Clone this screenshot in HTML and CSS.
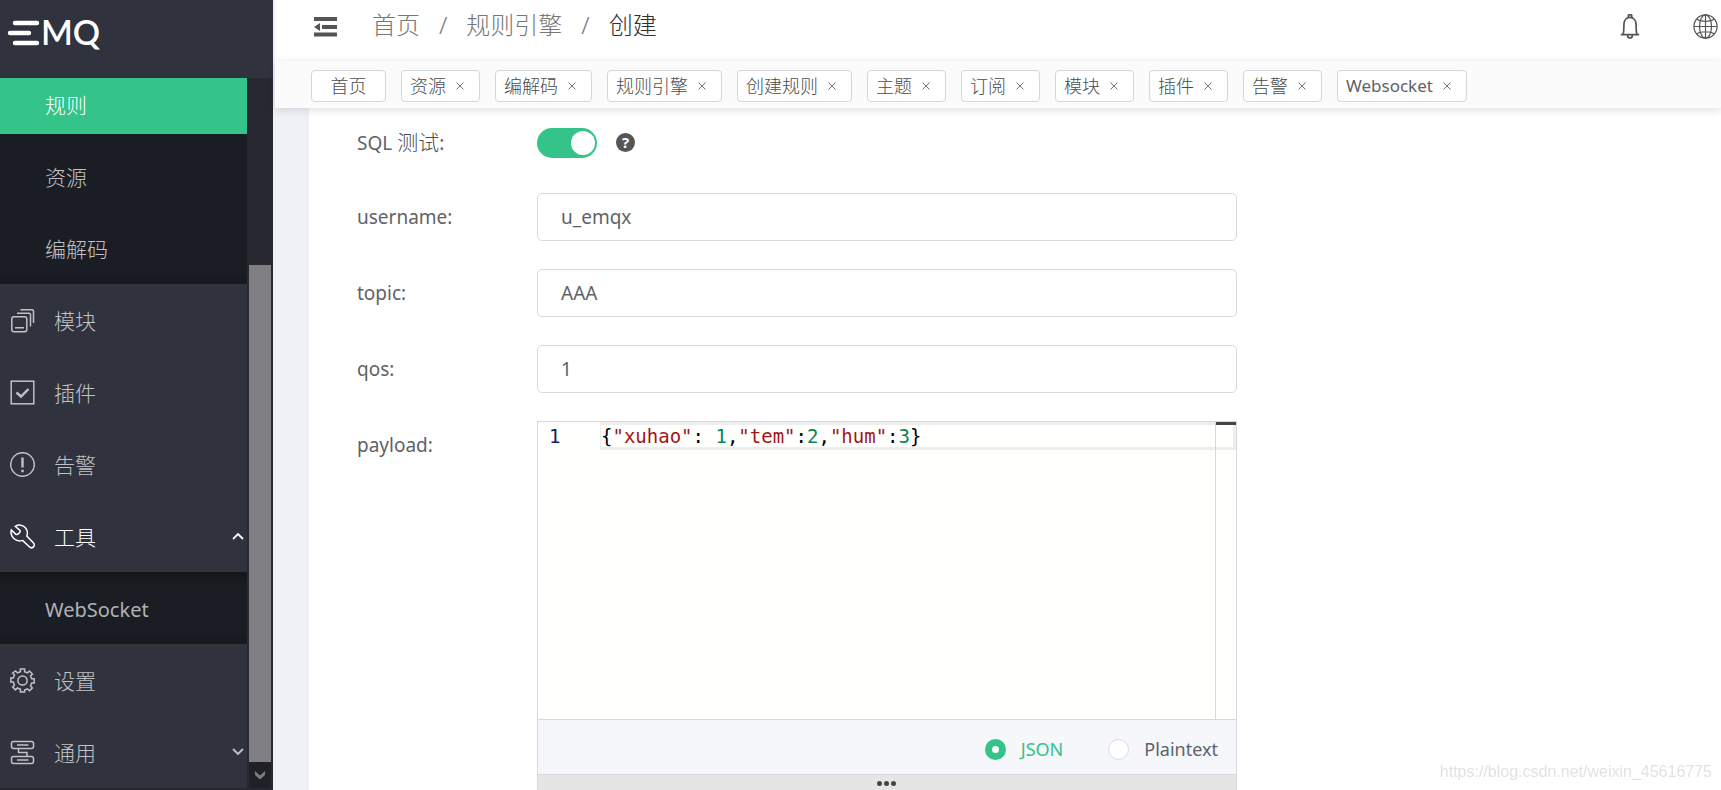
FILE: index.html
```html
<!DOCTYPE html>
<html lang="zh-CN">
<head>
<meta charset="utf-8">
<title>EMQ - 创建规则</title>
<link rel="stylesheet" href="styles.css">
</head>
<body>
<aside class="sidebar">
  <div class="logo">
    <svg width="33" height="26" viewBox="0 0 33 26" aria-hidden="true"><path d="M8 3H30M3 13H22M8 23H30" stroke="#fff" stroke-width="4.4" stroke-linecap="round"/></svg>
    <span class="logo-text">MQ</span>
  </div>
  <div class="sidebar-body">
    <nav class="menu">
      <div class="submenu submenu-rules">
        <a class="sub-item active" href="#">规则</a>
        <a class="sub-item" href="#">资源</a>
        <a class="sub-item" href="#">编解码</a>
      </div>
      <a class="menu-item" href="#">
        <svg class="menu-icon" viewBox="0 0 25 25"><rect x="1.800" y="8.800" width="15" height="15" rx="2.200"/><path d="M5 19.700h9M7 5.300h12q1.500 0 1.500 1.500V18.500M10.500 1.800h11.500q1.500 0 1.500 1.500V15"/></svg>
        <span>模块</span>
      </a>
      <a class="menu-item" href="#">
        <svg class="menu-icon" viewBox="0 0 25 25"><rect x="1.200" y="1.200" width="22.600" height="22.600"/><path class="bold" d="M6.500 12.500l4.500 4 7.500-7.500"/></svg>
        <span>插件</span>
      </a>
      <a class="menu-item" href="#">
        <svg class="menu-icon" viewBox="0 0 25 25"><circle cx="12.500" cy="12.500" r="11.800"/><path class="bold" d="M12.500 5.500v10M12.500 17.800v2.400"/></svg>
        <span>告警</span>
      </a>
      <a class="menu-item open" href="#">
        <svg class="menu-icon" viewBox="0 0 25 25"><path d="M5.300 2.300C8.600.2 13 .9 15.600 4c1.900 2.400 2.200 5.300 1.200 8l6.500 6.800c1.200 1.300 1.200 3 .1 4.100s-2.800 1.100-4-.1l-6.900-6.400c-2.700 1-5.700.5-8-1.400C1.500 12.500.500 9.200 1.300 5.900l4.600 4.500c1.700.8 4.900-2.200 4.100-3.900z"/></svg>
        <span>工具</span>
        <svg class="arrow" viewBox="0 0 12 8"><path d="M1 7l5-5 5 5"/></svg>
      </a>
      <div class="submenu">
        <a class="sub-item latin" href="#">WebSocket</a>
      </div>
      <a class="menu-item" href="#">
        <svg class="menu-icon" viewBox="0 0 25 25"><circle cx="12.500" cy="12.500" r="4.600"/><path d="M10.400 1h4.200v2.700l2.900 1.200 2-1.900 2.900 2.900-1.900 2 1.200 2.900h2.500v4.200h-2.500l-1.200 2.900 1.900 2-2.900 2.900-2-1.900-2.900 1.200V24h-4.200v-2.800l-2.900-1.200-2 1.900-2.900-2.900 1.900-2-1.200-2.900H.8v-4.200h2.500l1.200-2.900-1.900-2L5.500 3l2 1.900 2.900-1.200z"/></svg>
        <span>设置</span>
      </a>
      <a class="menu-item" href="#">
        <svg class="menu-icon" viewBox="0 0 25 25"><rect x="1.500" y="1.500" width="22" height="7" rx="2"/><rect x="1.500" y="16.500" width="22" height="7" rx="2"/><path d="M7 5h11.500M7 20h11.500M8.500 8.500v4h8.500v4"/></svg>
        <span>通用</span>
        <svg class="arrow" viewBox="0 0 12 8"><path d="M1 1l5 5 5-5"/></svg>
      </a>
    </nav>
    <div class="scroll-rail" aria-hidden="true">
      <div class="scroll-thumb"></div>
      <div class="scroll-button"><svg width="12" height="10" viewBox="0 0 12 10"><path d="M1 1l5 4.500 5-4.500v4L6 9.500 1 5z" fill="#7b7c80"/></svg></div>
    </div>
  </div>
</aside>
<div class="main">
  <header class="topbar">
    <button class="icon-button" aria-label="折叠菜单"><svg width="23" height="20" viewBox="0 0 23 20" fill="#555"><path d="M0 0h23v4H0zM8 8h15v4H8zM0 15.500h23v4H0zM0 10l6-4v8z"/></svg></button>
    <nav class="breadcrumb">
      <a href="#">首页</a><span>/</span><a href="#">规则引擎</a><span>/</span><strong>创建</strong>
    </nav>
    <div class="actions">
      <button class="icon-button" aria-label="通知"><svg width="20" height="25" viewBox="0 0 20 25" fill="none" stroke="#555" stroke-width="1.700"><path d="M.8 20.700h18.400M3 20.500c.8-2 .9-4 .9-9.500C3.900 6.500 6.300 3.400 10 3.400s6.100 3.100 6.100 7.600c0 5.500.1 7.500.9 9.500M8.300 3.300V1.600q0-.8.8-.8h1.800q.8 0 .8.800v1.700M7.500 21.500q.5 2.500 2.500 2.500t2.500-2.500"/></svg></button>
      <button class="icon-button" aria-label="语言"><svg width="25" height="25" viewBox="0 0 25 25" fill="none" stroke="#555" stroke-width="1.200"><circle cx="12.500" cy="12.500" r="11.600"/><ellipse cx="12.500" cy="12.500" rx="6" ry="11.600"/><path d="M12.500 1v23M1 12.500h23M4 5c3 3 14 3 17 0M4 20c3-3 14-3 17 0"/></svg></button>
    </div>
  </header>
  <nav class="tabs">
    <div class="tab home"><a href="#">首页</a></div>
    <div class="tab"><a href="#">资源</a><button class="close" aria-label="关闭"><svg viewBox="0 0 8 8"><path d="M.5.5l7 7m0-7l-7 7"/></svg></button></div>
    <div class="tab"><a href="#">编解码</a><button class="close" aria-label="关闭"><svg viewBox="0 0 8 8"><path d="M.5.5l7 7m0-7l-7 7"/></svg></button></div>
    <div class="tab"><a href="#">规则引擎</a><button class="close" aria-label="关闭"><svg viewBox="0 0 8 8"><path d="M.5.5l7 7m0-7l-7 7"/></svg></button></div>
    <div class="tab"><a href="#">创建规则</a><button class="close" aria-label="关闭"><svg viewBox="0 0 8 8"><path d="M.5.5l7 7m0-7l-7 7"/></svg></button></div>
    <div class="tab"><a href="#">主题</a><button class="close" aria-label="关闭"><svg viewBox="0 0 8 8"><path d="M.5.5l7 7m0-7l-7 7"/></svg></button></div>
    <div class="tab"><a href="#">订阅</a><button class="close" aria-label="关闭"><svg viewBox="0 0 8 8"><path d="M.5.5l7 7m0-7l-7 7"/></svg></button></div>
    <div class="tab"><a href="#">模块</a><button class="close" aria-label="关闭"><svg viewBox="0 0 8 8"><path d="M.5.5l7 7m0-7l-7 7"/></svg></button></div>
    <div class="tab"><a href="#">插件</a><button class="close" aria-label="关闭"><svg viewBox="0 0 8 8"><path d="M.5.5l7 7m0-7l-7 7"/></svg></button></div>
    <div class="tab"><a href="#">告警</a><button class="close" aria-label="关闭"><svg viewBox="0 0 8 8"><path d="M.5.5l7 7m0-7l-7 7"/></svg></button></div>
    <div class="tab"><a class="latin" href="#">Websocket</a><button class="close" aria-label="关闭"><svg viewBox="0 0 8 8"><path d="M.5.5l7 7m0-7l-7 7"/></svg></button></div>
  </nav>
  <main class="content">
    <form class="card">
      <div class="row row-switch">
        <label for="sql-test">SQL <span class="cjk">测试</span>:</label>
        <div class="switch-field">
          <input class="switch" type="checkbox" role="switch" id="sql-test" checked>
          <span class="help">?</span>
        </div>
      </div>
      <div class="row"><label for="username">username:</label><input class="text-input" id="username" type="text" value="u_emqx"></div>
      <div class="row"><label for="topic">topic:</label><input class="text-input" id="topic" type="text" value="AAA"></div>
      <div class="row"><label for="qos">qos:</label><input class="text-input" id="qos" type="text" value="1"></div>
      <div class="row row-editor">
        <label id="payload-label">payload:</label>
        <div class="editor" role="group" aria-labelledby="payload-label">
          <div class="code">
            <span class="line-number">1</span>
            <pre class="line">{<i class="str">"xuhao"</i>: <i class="num">1</i>,<i class="str">"tem"</i>:<i class="num">2</i>,<i class="str">"hum"</i>:<i class="num">3</i>}</pre>
            <div class="ruler"></div>
          </div>
          <div class="formats">
            <label class="option"><input type="radio" name="format" checked>JSON</label>
            <label class="option"><input type="radio" name="format">Plaintext</label>
          </div>
          <div class="resize"><svg width="20" height="5" viewBox="0 0 20 5" fill="#444"><circle cx="2.500" cy="2.500" r="2.500"/><circle cx="9.500" cy="2.500" r="2.500"/><circle cx="16.500" cy="2.500" r="2.500"/></svg></div>
        </div>
      </div>
    </form>
  </main>
</div>
<div class="watermark">https://blog.csdn.net/weixin_45616775</div>
</body>
</html>
```
FILE: styles.css
```css
* { box-sizing: border-box; }

body {
  margin: 0;
  height: 100vh;
  display: flex;
  overflow: hidden;
  background: #f0f1f6;
  color: #606266;
  font-family: "Noto Sans", "Noto Sans CJK SC", sans-serif;
}

a { color: inherit; text-decoration: none; }
button { padding: 0; border: 0; background: none; font: inherit; cursor: pointer; }
svg { display: block; }

/* Sidebar */
.sidebar {
  flex: 0 0 273px;
  display: flex;
  flex-direction: column;
  background: #30333e;
}
.logo {
  flex: 0 0 78px;
  display: flex;
  align-items: center;
  gap: 1px;
  padding: 0 0 12px 7px;
}
.logo-text {
  color: #fff;
  padding-bottom: 2px;
  font: 600 34px/40px Lato, sans-serif;
}
.sidebar-body {
  flex: 1;
  min-height: 0;
  display: flex;
  border-bottom: 2px solid #272830;
}
.menu { flex: 1; overflow: hidden; font-size: 21px; font-weight: 300; color: #c0c2c5; }
.menu-item {
  display: flex;
  align-items: center;
  gap: 19px;
  height: 72px;
  padding: 0 3px 0 10px;
}
.menu-icon {
  width: 25px;
  height: 25px;
  fill: none;
  stroke: currentColor;
  stroke-width: 1.5;
}
.menu-icon .bold { stroke-width: 2.4; }
.menu-item.open { color: #fff; }
.arrow {
  width: 12px;
  height: 8px;
  margin-left: auto;
  fill: none;
  stroke: currentColor;
  stroke-width: 1.8;
}
.submenu {
  display: flex;
  flex-direction: column;
  gap: 16px;
  padding: 8px 0;
  background: linear-gradient(#141619, #1a1d24 14px, #1a1d24 calc(100% - 14px), #16191c);
}
.submenu-rules {
  padding: 0 0 6px;
  background: linear-gradient(#1a1d24 calc(100% - 14px), #16191c);
}
.sub-item { padding-left: 45px; line-height: 54px; height: 56px; }
.sub-item.latin { font-size: 20px; font-weight: 400; line-height: 60px; color: #b0b2b5; }
.sub-item.active { background: #34c388; color: #fff; }
.scroll-rail {
  flex: 0 0 26px;
  display: flex;
  flex-direction: column;
  padding: 187px 2px 0;
  background: #272830;
}
.scroll-thumb { flex: 1; background: #7f7f84; }
.scroll-button {
  height: 26px;
  display: flex;
  align-items: center;
  justify-content: center;
  background: #202127;
}

/* Header */
.main {
  flex: 1;
  min-width: 0;
  display: flex;
  flex-direction: column;
  padding-left: 2px;
}
.topbar {
  flex: 0 0 61px;
  display: flex;
  align-items: center;
  padding: 0 3px 8px 39px;
  background: #fff;
}
.breadcrumb {
  display: flex;
  align-items: center;
  gap: 19px;
  margin-left: 35px;
  padding-bottom: 4px;
  font-size: 24px;
  font-weight: 300;
  line-height: 36px;
  color: #777;
}
.breadcrumb strong { font-weight: 300; color: #303030; }
.actions { display: flex; gap: 53px; margin-left: auto; }

.tabs {
  flex: 0 0 47px;
  display: flex;
  align-items: center;
  gap: 15px;
  padding: 3px 36px 0;
  background: #fbfbfb;
  box-shadow: 0 2px 8px rgba(0, 21, 41, 0.14);
  z-index: 1;
}
.tab {
  display: flex;
  align-items: center;
  gap: 10px;
  height: 32px;
  padding: 0 15px 0 8px;
  border: 1px solid #d5d6d9;
  border-radius: 4px;
  background: #fff;
  color: #4a4c50;
  font-size: 18px;
  font-weight: 300;
  line-height: 30px;
  white-space: nowrap;
}
.tab .latin { font-size: 17px; font-weight: 400; color: #606266; }
.tab.home { min-width: 75px; padding: 0; justify-content: center; }
.close svg { width: 8px; height: 8px; stroke: #777; fill: none; }

/* Form */
.content { flex: 1; min-height: 0; padding-left: 34px; overflow: hidden; }
.card { min-height: 100%; padding: 8px 48px 0; background: #fff; }
.row {
  display: grid;
  grid-template-columns: 180px minmax(0, 700px);
  margin-bottom: 28px;
  font-size: 19px;
  line-height: 48px;
}
.row-switch { line-height: 52px; margin-bottom: 24px; }
.cjk { font-size: 21px; font-weight: 300; color: #4a4c50; }
.switch-field { display: flex; align-items: center; gap: 19px; }
.switch {
  appearance: none;
  width: 60px;
  height: 30px;
  margin: 0;
  padding: 3px 2px;
  border-radius: 15px;
  background: #dcdfe6;
}
.switch::before {
  content: "";
  display: block;
  width: 24px;
  height: 24px;
  border-radius: 50%;
  background: #fff;
}
.switch:checked { background: #34c388; }
.switch:checked::before { margin-left: auto; }
.help {
  width: 19px;
  height: 19px;
  border-radius: 50%;
  background: #555;
  color: #fff;
  font-size: 15px;
  font-weight: 700;
  line-height: 19px;
  text-align: center;
}
.text-input {
  width: 100%;
  height: 48px;
  padding: 0 23px;
  border: 1px solid #d8d9dc;
  border-radius: 5px;
  background: #fff;
  color: #606266;
  font: inherit;
}

/* Payload editor */
.editor { border: 1px solid #d8d9dc; border-bottom: 0; }
.code {
  position: relative;
  display: grid;
  grid-template-columns: 62px 1fr;
  align-items: start;
  height: 297px;
  background: #fffffe;
  font-family: "DejaVu Sans Mono", monospace;
  font-size: 19px;
  line-height: 28px;
}
.line-number { padding-left: 11px; color: #0b216f; }
.line {
  margin: 0;
  border: 3px solid #eee;
  border-left-width: 1px;
  color: #000;
  font: inherit;
  line-height: 22px;
}
.line i { font-style: normal; }
.str { color: #a31515; }
.num { color: #098658; }
.ruler {
  position: absolute;
  top: 0;
  right: 0;
  bottom: 0;
  width: 21px;
  border-left: 1px solid #d8d9dc;
  background: linear-gradient(#444, #444) top / 100% 3px no-repeat;
}
.formats {
  display: flex;
  align-items: center;
  justify-content: flex-end;
  gap: 45px;
  height: 56px;
  padding: 4px 18px 0 0;
  border-top: 1px solid #d8d9dc;
  border-bottom: 1px solid #d8d9dc;
  background: #f5f7fb;
}
.option { display: flex; align-items: center; gap: 15px; font-size: 18px; line-height: 24px; }
.option:has(:checked) { color: #34c388; }
.option input {
  appearance: none;
  width: 21px;
  height: 21px;
  margin: 0;
  border: 1px solid #d8d9dc;
  border-radius: 50%;
  background: #fff;
}
.option input:checked { border: 7px solid #34c388; }
.resize {
  display: flex;
  align-items: center;
  justify-content: center;
  height: 16px;
  background: #e5e5e5;
}

.watermark {
  position: fixed;
  right: 9px;
  bottom: 8px;
  color: #e2e2e2;
  font: 16px/20px "Liberation Sans", sans-serif;
  z-index: 2;
}
```
